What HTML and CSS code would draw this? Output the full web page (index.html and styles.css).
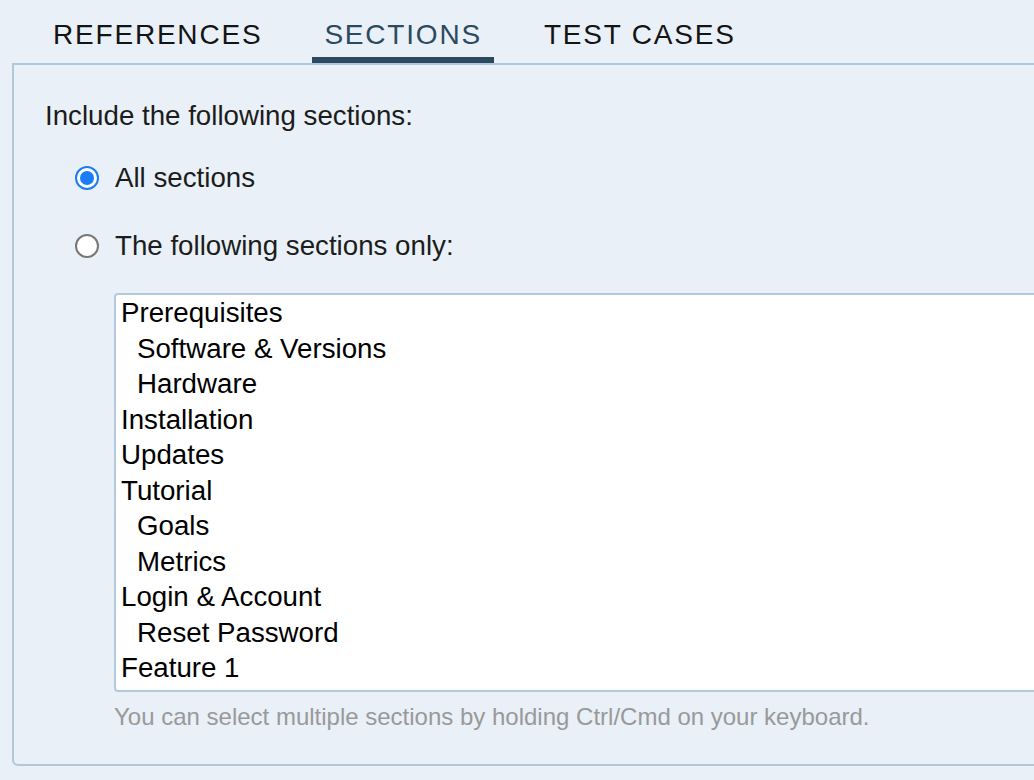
FILE: index.html
```html
<!DOCTYPE html>
<html lang="en">
<head>
<meta charset="utf-8">
<title>Sections</title>
<link rel="stylesheet" href="styles.css">
</head>
<body>
  <nav class="tabs">
    <span class="tab">REFERENCES</span>
    <span class="tab tab-active">SECTIONS</span>
    <span class="tab">TEST CASES</span>
  </nav>
  <section class="panel">
    <p class="intro">Include the following sections:</p>
    <div class="radios">
      <label class="radio-row"><span class="radio radio-checked"></span><span class="radio-label">All sections</span></label>
      <label class="radio-row"><span class="radio"></span><span class="radio-label">The following sections only:</span></label>
    </div>
    <div class="listbox">
      <div class="item">Prerequisites</div>
      <div class="item child">Software &amp; Versions</div>
      <div class="item child">Hardware</div>
      <div class="item">Installation</div>
      <div class="item">Updates</div>
      <div class="item">Tutorial</div>
      <div class="item child">Goals</div>
      <div class="item child">Metrics</div>
      <div class="item">Login &amp; Account</div>
      <div class="item child">Reset Password</div>
      <div class="item">Feature 1</div>
      <div class="item">Feature 2</div>
    </div>
    <p class="help">You can select multiple sections by holding Ctrl/Cmd on your keyboard.</p>
  </section>
</body>
</html>
```

FILE: styles.css
```css
html {
  overflow: hidden;
  background: #e9f0f7;
}
body {
  margin: 0;
  background: #e9f0f7;
  font-family: "Liberation Sans", Arial, sans-serif;
  width: 1200px;
}
.tabs {
  display: flex;
  gap: 38px;
  padding: 21px 0 0 41px;
}
.tab {
  font-size: 28px;
  line-height: 28px;
  letter-spacing: 1.8px;
  color: #141414;
  padding: 0 12px 8px;
  border-bottom: 6px solid transparent;
}
.tab-active {
  color: #2b4a5f;
  border-bottom-color: #2b4a5f;
}
.panel {
  margin-left: 12px;
  width: 1100px;
  border: 2px solid #afc8dc;
  border-radius: 0 0 6px 6px;
  padding: 35px 0 33px 31px;
  box-sizing: border-box;
}
.intro {
  margin: 0;
  font-size: 27.7px;
  line-height: 32px;
  color: #1c1c1c;
}
.radios {
  display: flex;
  flex-direction: column;
  gap: 36px;
  margin: 30px 0 0 30px;
}
.radio-row {
  display: flex;
  align-items: center;
  gap: 16px;
  height: 32px;
}
.radio {
  width: 24px;
  height: 24px;
  box-sizing: border-box;
  border-radius: 50%;
  border: 2px solid #777;
  background: #fff;
  flex: none;
  position: relative;
}
.radio-checked {
  border: 2.5px solid #1a7cf6;
}
.radio-checked::after {
  content: "";
  position: absolute;
  left: 2.5px;
  top: 2.5px;
  width: 14px;
  height: 14px;
  border-radius: 50%;
  background: #1a7cf6;
}
.radio-label {
  font-size: 27.7px;
  line-height: 32px;
  color: #1c1c1c;
}
.listbox {
  margin: 31px 0 0 69px;
  width: 980px;
  height: 399px;
  box-sizing: border-box;
  border: 2px solid #b3cadd;
  border-radius: 4px;
  background: #fff;
  overflow: hidden;
  padding: 0 5px;
}
.item {
  font-size: 27.7px;
  line-height: 35.5px;
  color: #000;
  white-space: nowrap;
}
.child {
  padding-left: 16px;
}
.help {
  margin: 11px 0 0 69px;
  font-size: 24px;
  line-height: 28px;
  color: #999;
}
```
